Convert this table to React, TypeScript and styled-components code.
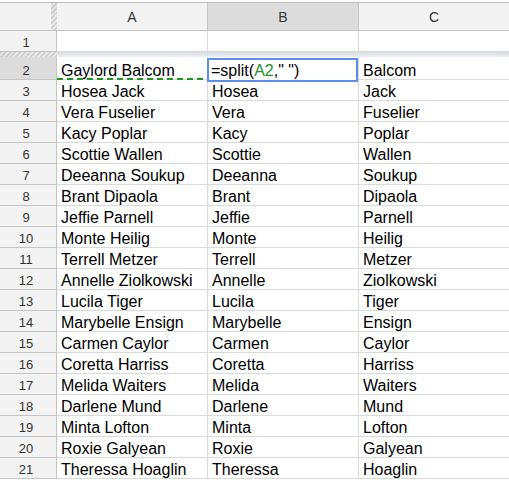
import React from "react";
import styled, { createGlobalStyle, css } from "styled-components";

const Global = createGlobalStyle`
  html, body { margin: 0; padding: 0; background: #fff; }
  body { font-family: "Liberation Sans", Arial, sans-serif; overflow: hidden; }
`;

const COLS = "57px 151px 151px 150px";
const GRID_LINE = "#dadada";
const HEAD_LINE = "#c4c4c4";
const HATCH = css`
  background: repeating-linear-gradient(
    135deg,
    #cfcfcf 0px,
    #cfcfcf 1.5px,
    #e6e6e6 1.5px,
    #e6e6e6 3.5px
  );
`;

const Sheet = styled.div`
  padding-top: 2px;
  width: 509px;
  display: flex;
  flex-direction: column;
`;

const HeaderRow = styled.div`
  display: grid;
  grid-template-columns: ${COLS};
  height: 29px;
  box-sizing: border-box;
  border-top: 1px solid #bdbdbd;
  border-bottom: 1px solid ${HEAD_LINE};
  background: #f3f3f3;
`;

const Corner = styled.div`
  display: flex;
  justify-content: flex-end;
`;

const Hatch = styled.div`
  width: 6px;
  height: 100%;
  ${HATCH};
`;

const ColHeader = styled.div<{ $selected?: boolean }>`
  display: flex;
  align-items: center;
  justify-content: center;
  padding-top: 1px;
  font-size: 14px;
  color: #333;
  border-right: 1px solid ${HEAD_LINE};
  background: ${(p) => (p.$selected ? "#dcdcdc" : "#f3f3f3")};
  &:last-child { border-right: none; }
`;

const DataRow = styled.div<{ $h: number }>`
  display: grid;
  grid-template-columns: ${COLS};
  height: ${(p) => p.$h}px;
`;

const RowHeader = styled.div<{ $selected?: boolean }>`
  display: flex;
  align-items: flex-end;
  justify-content: center;
  padding-right: 4px;
  box-sizing: border-box;
  font-size: 13px;
  line-height: 16px;
  color: #333;
  background: ${(p) => (p.$selected ? "#dcdcdc" : "#f3f3f3")};
  border-right: 1px solid ${HEAD_LINE};
  border-bottom: 1px solid ${HEAD_LINE};
`;

const Cell = styled.div`
  position: relative;
  display: flex;
  align-items: flex-end;
  padding-left: 4px;
  box-sizing: border-box;
  font-size: 16px;
  line-height: 16px;
  color: #000;
  white-space: nowrap;
  border-right: 1px solid ${GRID_LINE};
  border-bottom: 1px solid ${GRID_LINE};
  &:last-child { border-right: none; }
`;

const FrozenRow = styled.div`
  display: grid;
  grid-template-columns: 57px 1fr;
  height: 5px;
`;

const FrozenHatch = styled.div`
  ${HATCH};
`;

const FrozenBar = styled.div`
  background: linear-gradient(#d7dce2, #e4e8ec 60%, #eef1f4);
`;

const Editor = styled.div`
  position: absolute;
  left: -1px;
  top: 1px;
  width: 151px;
  height: 24px;
  box-sizing: border-box;
  border: 2px solid #5b8ef0;
  background: #fff;
  display: flex;
  align-items: flex-end;
  padding: 0 0 1px 2px;
  font-size: 16px;
  line-height: 17px;
  color: #000;
  z-index: 2;
`;

const Ref = styled.span`
  color: #23922a;
`;

const CopyMarquee = styled.div`
  position: absolute;
  left: 0;
  right: -1px;
  bottom: -1px;
  height: 2px;
  background: repeating-linear-gradient(
    to right,
    #1f961f 0px,
    #1f961f 6px,
    transparent 6px,
    transparent 10px
  );
  z-index: 1;
`;

const names: [string, string, string][] = [
  ["Hosea Jack", "Hosea", "Jack"],
  ["Vera Fuselier", "Vera", "Fuselier"],
  ["Kacy Poplar", "Kacy", "Poplar"],
  ["Scottie Wallen", "Scottie", "Wallen"],
  ["Deeanna Soukup", "Deeanna", "Soukup"],
  ["Brant Dipaola", "Brant", "Dipaola"],
  ["Jeffie Parnell", "Jeffie", "Parnell"],
  ["Monte Heilig", "Monte", "Heilig"],
  ["Terrell Metzer", "Terrell", "Metzer"],
  ["Annelle Ziolkowski", "Annelle", "Ziolkowski"],
  ["Lucila Tiger", "Lucila", "Tiger"],
  ["Marybelle Ensign", "Marybelle", "Ensign"],
  ["Carmen Caylor", "Carmen", "Caylor"],
  ["Coretta Harriss", "Coretta", "Harriss"],
  ["Melida Waiters", "Melida", "Waiters"],
  ["Darlene Mund", "Darlene", "Mund"],
  ["Minta Lofton", "Minta", "Lofton"],
  ["Roxie Galyean", "Roxie", "Galyean"],
  ["Theressa Hoaglin", "Theressa", "Hoaglin"],
];

export default function App() {
  return (
    <>
      <Global />
      <Sheet>
        <HeaderRow>
          <Corner>
            <Hatch />
          </Corner>
          <ColHeader>A</ColHeader>
          <ColHeader $selected>B</ColHeader>
          <ColHeader>C</ColHeader>
        </HeaderRow>

        <DataRow $h={21}>
          <RowHeader>1</RowHeader>
          <Cell />
          <Cell />
          <Cell />
        </DataRow>

        <FrozenRow>
          <FrozenHatch />
          <FrozenBar />
        </FrozenRow>

        <DataRow $h={23}>
          <RowHeader $selected>2</RowHeader>
          <Cell>
            Gaylord Balcom
            <CopyMarquee />
          </Cell>
          <Cell>
            <Editor>
              =split(<Ref>A2</Ref>," ")
            </Editor>
          </Cell>
          <Cell>Balcom</Cell>
        </DataRow>

        {names.map(([full, first, last], i) => (
          <DataRow $h={21} key={full}>
            <RowHeader>{i + 3}</RowHeader>
            <Cell>{full}</Cell>
            <Cell>{first}</Cell>
            <Cell>{last}</Cell>
          </DataRow>
        ))}
      </Sheet>
    </>
  );
}
